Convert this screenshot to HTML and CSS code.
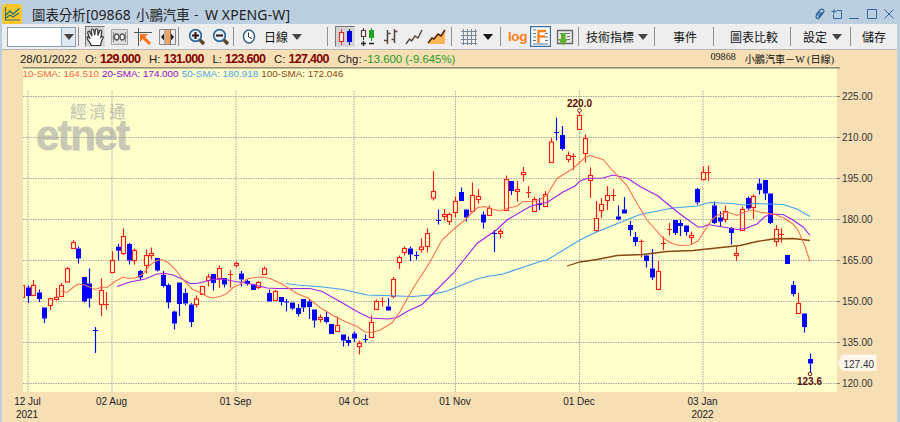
FILE: index.html
```html
<!DOCTYPE html>
<html lang="zh-Hant">
<head>
    <meta charset="UTF-8">
    <meta name="viewport" content="width=device-width, initial-scale=1.0">
    <title>圖表分析[09868 小鵬汽車 - W XPENG-W]</title>
    <link rel="stylesheet" href="styles.css">
</head>
<body>
    <div class="window">
        <header class="titlebar">
            <svg class="app-icon" width="20" height="20" viewBox="0 0 20 20">
                <rect width="20" height="20" rx="3" fill="#fdc72c"/>
                <path d="M3.5 3v13H18" fill="none" stroke="#2b6f78" stroke-width="1.2"/>
                <path d="M4 11l4-4 3 3 6.500-5.500M4 14l4-3 3 2 6-4" fill="none" stroke="#2b6f78" stroke-width="1.3"/>
            </svg>
            <h1 class="title"><span class="title-name">圖表分析</span><span class="title-code">[09868</span><span class="title-stock">小鵬汽車</span><span class="title-dash">-</span><span class="title-en">W XPENG-W]</span></h1>
            <div class="window-buttons">
                <svg width="12" height="12" viewBox="0 0 12 12"><path d="M2 7l4-5c2-2 5 0 3.500 2.500L5.500 9.500C4 11.500 1 10 2.500 7.500L6 3.500M8 4L4.500 8.500" fill="none" stroke="#34689c" stroke-width="1.3"/></svg>
                <svg width="12" height="12" viewBox="0 0 12 12"><path d="M5.500 2.500h5v8h-8v-4M3 1v5M.5 3.500h5" fill="none" stroke="#34689c"/></svg>
                <svg width="12" height="12" viewBox="0 0 12 12"><path d="M1 10.500h10" stroke="#34689c"/></svg>
                <svg width="12" height="12" viewBox="0 0 12 12"><path d="M1.500 1.500h9v9h-9z" fill="none" stroke="#34689c"/></svg>
                <svg width="12" height="12" viewBox="0 0 12 12"><path d="M1.500 1.500l9 9M10.500 1.500l-9 9" stroke="#34689c"/></svg>
            </div>
        </header>

        <nav class="toolbar">
            <div class="group group-combo">
                <div class="combo">
                    <span class="combo-field"></span>
                    <span class="combo-button"><i class="caret"></i></span>
                </div>
            </div>
            <div class="group group-cursor">
                <span class="tool pressed">
                    <svg width="18" height="18" viewBox="0 0 18 18"><path d="M5 17.500c0-3-3.500-4.500-4-8 .5-1.500 2-.5 3 1.500L1.800 5C1.500 3 3.500 2.500 4 4.500L6 8 5.200 2.500c0-2 2.300-2 2.600 0L8.800 7l.5-5.200c.3-1.600 2.500-1.300 2.500.4l.2 5.300 1.500-4.500c.7-1.600 2.700-.8 2.300 1l-1 5.500 1-1c1-.5 1.800.5 1.200 1.500-1.500 2-2 3.500-2.500 7.500z" fill="#fff" stroke="#333" stroke-width="1.200"/></svg>
                </span>
                <span class="tool">
                    <svg width="17" height="16" viewBox="0 0 17 16"><path d="M.5.500h16v15H.5z" fill="#ddd" stroke="#a4a4a4"/><path d="M2.500 3v10M14.500 3v10M1 8h15" stroke="#888"/><ellipse cx="5.700" cy="8" rx="2.200" ry="3" fill="#fff" stroke="#555" stroke-width="1.300"/><ellipse cx="11.300" cy="8" rx="2.200" ry="3" fill="#fff" stroke="#555" stroke-width="1.300"/></svg>
                </span>
                <span class="tool">
                    <svg width="18" height="18" viewBox="0 0 18 18"><path d="M0 4.500h18M4.500 0v18" stroke="#555"/><path d="M6 6h8l-3 2.800 6 6-2.200 2.200-6-6L6 14z" fill="#fa7418"/></svg>
                </span>
                <span class="tool">
                    <svg width="17" height="16" viewBox="0 0 17 16"><path d="M.5.500h16v15H.5z" fill="#ececec" stroke="#888"/><path d="M6 0v16M11.500 0v16" stroke="#777"/><path d="M6.500 1H11v14H6.500z" fill="#f8a15a"/><path d="M5 4.500v7L2 8zM12 4.500v7l3-3.500z" fill="#222"/></svg>
                </span>
            </div>
            <div class="group group-zoom">
                <span class="tool">
                    <svg width="18" height="18" viewBox="0 0 18 18"><path d="M11.500 11.500l4.500 4.500" stroke="#5b4128" stroke-width="3.200"/><circle cx="7.500" cy="7.500" r="5.800" fill="#e4f0fa" stroke="#2d6599" stroke-width="1.700"/><path d="M4 7.500h7M7.500 4v7" stroke="#311" stroke-width="2"/></svg>
                </span>
                <span class="tool">
                    <svg width="18" height="18" viewBox="0 0 18 18"><path d="M11.500 11.500l4.500 4.500" stroke="#5b4128" stroke-width="3.200"/><circle cx="7.500" cy="7.500" r="5.800" fill="#e4f0fa" stroke="#2d6599" stroke-width="1.700"/><path d="M4 7.500h7" stroke="#311" stroke-width="2"/></svg>
                </span>
            </div>
            <div class="group group-period">
                <svg width="14" height="15" viewBox="0 0 14 15"><ellipse cx="7" cy="7.500" rx="5.500" ry="6.500" fill="#fff" stroke="#3c6690" stroke-width="1.600"/><path d="M6.500 3.500v4.500l3.500 1.500" fill="none" stroke="#333"/></svg>
                <span class="label">日線</span>
                <i class="caret"></i>
            </div>
            <div class="group group-style">
                <span class="tool pressed">
                    <svg width="18" height="18" viewBox="0 0 18 18"><path d="M5.500 1v16" stroke="#e33"/><path d="M3.500 4.500h4v9h-4z" fill="#fff" stroke="#e22" stroke-width="1.200"/><path d="M13.500 1v16" stroke="#00c"/><path d="M11 3h5v11h-5z" fill="#00d"/></svg>
                </span>
                <span class="tool">
                    <svg width="18" height="18" viewBox="0 0 18 18"><path d="M4.500 0v12" stroke="#433"/><path d="M2.500 2.500h4v6h-4z" fill="#fff" stroke="#533" stroke-width="1.200"/><path d="M12.500 0v13" stroke="#1a9a1a"/><path d="M10 2h5v8h-5z" fill="#1fa51f"/><path d="M2 15.500h5M4.500 13v5M10 15.500h5" stroke="#222" stroke-width="1.300"/></svg>
                </span>
                <span class="tool">
                    <svg width="18" height="18" viewBox="0 0 18 18"><path d="M5.500 2v14M2 12.500h3.500M5.500 5.500h3M12.500 1v14M9.500 11.500h3M12.500 3.500h3" fill="none" stroke="#54443c" stroke-width="1.500"/></svg>
                </span>
                <span class="tool">
                    <svg width="18" height="18" viewBox="0 0 18 18"><path d="M1 16l3.500-5 2 2 3.500-5 3 2 4-8" fill="none" stroke="#54443c" stroke-width="1.400"/></svg>
                </span>
                <span class="tool">
                    <svg width="20" height="18" viewBox="0 0 20 18"><path d="M1 15l4-5 2 1 4-5 3 2 4-6v14H1z" fill="#fbb456"/><path d="M1 15l4-5 2 1 4-5 3 2 4-6" fill="none" stroke="#54230f" stroke-width="1.600"/></svg>
                </span>
            </div>
            <div class="group group-grid">
                <svg width="16" height="16" viewBox="0 0 16 16"><path d="M2.500 0v16M6.500 0v16M10.500 0v16M14.500 0v16M0 2.500h16M0 6.500h16M0 10.500h16M0 14.500h16" stroke="#788797"/></svg>
                <i class="caret caret-dark"></i>
            </div>
            <div class="group group-scale">
                <span class="log">log</span>
                <span class="tool fib">
                    <svg width="21" height="21" viewBox="0 0 21 21"><path d="M.5.500h20v20H.5z" fill="#fff" stroke="#3a6ea5" stroke-width="1.400"/><path d="M3 4h3M3 7.500h3M3 11h3M3 14.500h3M3 18h15M15 7.500h3M15 11h3M15 14.500h3" stroke="#5b7288"/><path d="M8.500 17V5h7.500M8.500 10.500h6.500" fill="none" stroke="#ff7f1c" stroke-width="2.400"/></svg>
                </span>
                <span class="tool">
                    <svg width="18" height="18" viewBox="0 0 18 18"><path d="M1.500 2.500h15v13h-15z" fill="#e7e7e7" stroke="#666" stroke-width="1.300"/><path d="M4 5.500h10M11 8.500h3M11 11.500h3" stroke="#777"/><path d="M5 5h4.500v6H12l-4.700 6.500L2 11h3z" fill="#5fae2b"/></svg>
                </span>
            </div>
            <div class="group group-indicator"><span class="label">技術指標</span><i class="caret"></i></div>
            <div class="group group-event"><span class="label">事件</span></div>
            <div class="group group-compare"><span class="label">圖表比較</span></div>
            <div class="group group-setting"><span class="label">設定</span><i class="caret"></i></div>
            <div class="group group-save"><span class="label">儲存</span></div>
        </nav>

        <main class="content">
            <div class="quote">
                <span class="date">28/01/2022</span>
                <span class="key key-o">O:</span><b>129.000</b>
                <span class="key key-h">H:</span><b>131.000</b>
                <span class="key key-l">L:</span><b>123.600</b>
                <span class="key key-c">C:</span><b>127.400</b>
                <span class="key key-chg">Chg:</span><span class="change">-13.600 (-9.645%)</span>
                <span class="stock"><span>09868</span><span>小鵬汽車－W (日線)</span></span>
            </div>
            <div class="plot">
                <svg class="chart" id="chart" width="895" height="355" viewBox="2 67 895 355"></svg>
                <div class="legend">
                    <span class="sma10">10-SMA: 164.510</span>
                    <span class="sma20">20-SMA: 174.000</span>
                    <span class="sma50">50-SMA: 180.918</span>
                    <span class="sma100">100-SMA: 172.046</span>
                </div>
            </div>
        </main>
    </div>
    <script src="chart.js"></script>
</body>
</html>
```
FILE: styles.css
```css
* {
    margin: 0;
    padding: 0;
    box-sizing: border-box;
}

body {
    font-family: 'Liberation Sans', 'Noto Sans CJK TC', sans-serif;
    background: #bccfe1;
    color: #222;
    overflow: hidden;
}

.window {
    width: 900px;
    height: 422px;
    padding: 0 3px 0 2px;
    display: flex;
    flex-direction: column;
}

/* title bar */
.titlebar {
    height: 24px;
    display: flex;
    align-items: center;
    padding: 4px 2px 0 0;
}

.title {
    display: flex;
    align-items: center;
    height: 20px;
    margin-left: 10px;
    font-family: 'Noto Sans', 'Noto Sans CJK TC', sans-serif;
    font-size: 13.4px;
    font-weight: normal;
    white-space: nowrap;
}

.title span {
    flex: none;
}

.title-name {
    width: 54px;
}

.title-code {
    width: 50px;
    font-size: 14px;
}

.title-stock {
    width: 58px;
}

.title-dash {
    width: 11px;
}

.title-en {
    font-size: 14px;
    letter-spacing: 0.1px;
}

.window-buttons {
    margin-left: auto;
    display: flex;
    gap: 5.3px;
}

/* toolbar */
.toolbar {
    height: 26px;
    display: flex;
    background: #eeeeee;
    border-bottom: 1px solid #b5b5b5;
}

.group {
    display: flex;
    align-items: center;
    flex: none;
    background: linear-gradient(#8f8f8f, #8f8f8f) right 3px / 1px 19px no-repeat;
}

.group-combo {
    width: 77px;
    padding-left: 5px;
}

.group-cursor {
    width: 100px;
    padding-left: 6px;
    gap: 4px;
}

.group-zoom {
    width: 55px;
    padding-left: 9px;
    gap: 6px;
}

.group-period {
    width: 94px;
    padding-left: 8px;
}

.group-period .label {
    margin: 0 4px 0 8px;
}

.group-style {
    width: 124px;
    padding-left: 7px;
    gap: 3px;
}

.group-grid {
    width: 49px;
    padding-left: 9px;
    gap: 6px;
}

.group-scale {
    width: 78px;
    padding-left: 7px;
}

.group-indicator {
    width: 76px;
    padding-left: 7px;
    gap: 4px;
}

.group-event {
    width: 59px;
    padding-left: 18px;
}

.group-compare {
    width: 77px;
    padding-left: 16px;
}

.group-setting {
    width: 60px;
    padding-left: 12px;
    gap: 5px;
}

.group-save {
    width: 46px;
    padding-left: 11px;
    background: none;
}

.combo {
    display: flex;
    width: 69px;
    height: 20px;
    border: 1px solid #8c9db0;
    background: #fff;
}

.combo-field {
    flex: 1;
}

.combo-button {
    width: 14px;
    display: flex;
    align-items: center;
    justify-content: center;
    border-left: 1px solid #8fb0d0;
    background: #dfe7ef;
}

.caret {
    width: 0;
    height: 0;
    border: 5px solid transparent;
    border-top: 6px solid #444;
    border-bottom: 0;
}

.caret-dark {
    border-top-color: #111;
}

.tool {
    display: flex;
    align-items: center;
    justify-content: center;
    min-width: 18px;
    height: 21px;
}

.tool svg {
    flex: none;
}

.group-cursor .tool,
.group-style .tool {
    width: 20px;
}

.pressed {
    background: #d4d4d4;
    border: 1px solid #777;
    border-right-color: #ddd;
    border-bottom-color: #ddd;
}

.label {
    color: #111;
    font-family: 'Noto Sans CJK TC', sans-serif;
    font-size: 12px;
    line-height: 18px;
    white-space: nowrap;
}

.log {
    width: 21px;
    color: #ff7f1c;
    font-size: 13.5px;
    font-weight: bold;
    letter-spacing: -0.4px;
}

.fib {
    margin: 0 5px 0 1px;
}

/* quote line */
.content {
    flex: 1;
    background: #f7dfb5;
}

.quote {
    height: 17px;
    display: flex;
    align-items: center;
    padding: 0 63px 0 18px;
    font-size: 11.4px;
    white-space: nowrap;
}

.date {
    width: 65px;
}

.quote b {
    width: 49px;
    color: #800000;
    font-size: 12.5px;
    letter-spacing: -0.7px;
}

.key-o {
    width: 15px;
}

.key-h {
    width: 14.5px;
}

.key-l {
    width: 12.5px;
}

.key-c {
    width: 14.5px;
}

.key-chg {
    width: 26px;
}

.change {
    color: #1f9a1f;
}

.stock {
    display: flex;
    gap: 9px;
    margin-left: auto;
    color: #111;
    font-family: 'Liberation Serif', 'Noto Sans CJK TC', serif;
    font-size: 10.1px;
}

/* chart */
.plot {
    position: relative;
}

.chart {
    display: block;
}

.legend {
    position: absolute;
    top: 1px;
    left: 20.5px;
    display: flex;
    gap: 3.2px;
    font-size: 9.9px;
    letter-spacing: -0.03px;
    line-height: 12px;
    white-space: nowrap;
}

.sma10 { color: #ff6347; }
.sma20 { color: #9400d3; }
.sma50 { color: #4aa3e8; }
.sma100 { color: #8b4513; }

.chart text {
    font-size: 10px;
    fill: #222;
}

.chart .axis {
    fill: #333;
}

.chart .middle {
    text-anchor: middle;
}

.chart .brand-cn {
    font-size: 16.5px;
    font-weight: 500;
    letter-spacing: 3px;
    fill: #c8c8b4;
}

.chart .brand {
    font-size: 42px;
    font-weight: bold;
    letter-spacing: -1.6px;
    fill: #c8c8b4;
    stroke: #c8c8b4;
    stroke-width: 0.8;
}

.chart .extreme {
    font-weight: bold;
    fill: #5a0a0a;
}

.grid {
    stroke: #a8a8a0;
    stroke-dasharray: 1.5 1;
}

.line {
    fill: none;
    stroke-width: 1.1;
}

.line10 { stroke: #ff7050; }
.line20 { stroke: #a020f0; }
.line50 { stroke: #40a0f0; }
.line100 { stroke: #8b4513; stroke-width: 1.3; }

.up {
    fill: #ffffcc;
    stroke: #ff1a1a;
    stroke-width: 1.15;
}

.down {
    fill: #0000ff;
    stroke: #0000ff;
    stroke-width: 1.15;
}
```
FILE: chart.js
```js
const chart = document.getElementById('chart');
const START = 22.4;
const STEP = 5.626;

// high, body top, body bottom, low, direction (one row per trading day)
const candles = [
    [285.5, 285.5, 297.5, 297.5, 'u'], [285.5, 287.5, 296, 303, 'd'], [280, 285.5, 295.5, 295.5, 'u'],
    [289.5, 292.5, 299, 302, 'd'], [307.5, 307.5, 318.5, 323, 'd'], [297.5, 298.7, 305.5, 310, 'u'],
    [288, 297.5, 299.5, 300.5, 'u'], [283, 285.5, 296.5, 296.5, 'u'], [267, 268.7, 282, 282, 'u'],
    [240, 242.5, 248.5, 249, 'u'], [246.5, 248.5, 258.5, 263.5, 'd'], [277, 277, 301.5, 302.5, 'd'],
    [268.5, 283.5, 298.5, 307.5, 'd'], [327, 330.5, 330.5, 353, 'd'], [278.5, 290.5, 304.5, 316, 'u'],
    [292, 304.5, 304.5, 309.5, 'u'], [251, 260.5, 272.5, 272.5, 'u'], [243.7, 246.7, 250.7, 260.5, 'd'],
    [228.5, 236.5, 253.5, 255, 'u'], [243, 244, 260.5, 264.5, 'd'], [248.5, 250.5, 260.5, 264.5, 'u'],
    [270, 271, 277.5, 280.5, 'd'], [249.5, 255.5, 265.5, 273.5, 'u'], [247.5, 253.5, 255.5, 259.5, 'u'],
    [258, 258, 270.5, 271.5, 'd'], [271, 275, 286, 287.5, 'd'], [283.5, 285, 302.5, 308.5, 'd'],
    [310.5, 311.5, 323.5, 329.5, 'd'], [282.5, 282.5, 304, 316, 'd'], [288.5, 293, 303.5, 305.5, 'd'],
    [303, 304.5, 322, 327, 'd'], [295.5, 299, 304.5, 307.5, 'u'], [286.5, 286.5, 294.5, 294.5, 'u'],
    [274, 277, 280.5, 286.5, 'u'], [274, 274, 283, 290.5, 'd'], [265.5, 268.5, 278.5, 288, 'u'],
    [278, 278, 284.5, 287.5, 'd'], [270, 274.5, 274.5, 287.5, 'u'], [261.5, 263.5, 265.5, 267.5, 'u'],
    [271, 273.5, 279.5, 286.5, 'd'], [279.5, 281, 284, 285.5, 'd'], [284.5, 284.5, 290, 290, 'd'],
    [281, 282.5, 287.5, 289, 'u'], [266.5, 268.7, 274.5, 274.5, 'u'], [289.5, 293, 301.5, 301.5, 'd'],
    [290, 291.5, 300.5, 300.5, 'u'], [297, 297, 302, 305.5, 'd'], [299, 302, 302, 311.5, 'd'],
    [302.5, 302.5, 308.5, 310, 'd'], [304, 308, 314, 316.5, 'd'], [299, 299, 307.5, 312, 'd'],
    [300, 301.5, 307, 319, 'd'], [309.5, 309.5, 320.5, 327.5, 'd'], [314.5, 317.5, 319.5, 322.5, 'u'],
    [312, 317, 322, 323.5, 'd'], [324, 324, 334, 334, 'd'], [316.5, 325.5, 331.5, 331.5, 'u'],
    [334.5, 334.5, 340.5, 346.5, 'd'], [336.5, 340, 343, 346, 'd'], [331.5, 333.5, 338.5, 342, 'd'],
    [340.5, 343.5, 346.5, 354.5, 'u'], [334.5, 339.5, 339.5, 342.5, 'd'], [315.5, 322.5, 337.5, 337.5, 'u'],
    [299.5, 301.5, 309.5, 309.5, 'u'], [297.5, 301.5, 301.5, 306.5, 'u'], [298, 306.5, 310.5, 310.5, 'd'],
    [277, 279.5, 296.5, 298.5, 'u'], [255.5, 257.5, 262.5, 269, 'u'], [246.5, 248.5, 252.5, 255.5, 'u'],
    [246.5, 248.5, 254.5, 261, 'd'], [251.5, 255.5, 255.5, 259.5, 'd'], [238.5, 247, 249.5, 252.5, 'u'],
    [228.5, 233.5, 246.5, 252.5, 'u'], [171, 191.5, 198, 200.5, 'u'], [209.5, 220.5, 220.5, 224.5, 'd'],
    [209, 214.5, 216.5, 220.5, 'u'], [212.5, 214.5, 221.5, 225, 'u'], [196.5, 201.5, 212.5, 217.5, 'u'],
    [187.5, 192, 201, 201, 'd'], [209.5, 209.5, 217.5, 221.5, 'd'], [182.5, 195.5, 211.5, 211.5, 'u'],
    [189, 196.5, 199.5, 203.5, 'u'], [211.5, 214.5, 222.5, 228.5, 'd'], [205.5, 208.5, 215.5, 215.5, 'u'],
    [230, 233.5, 233.5, 252, 'd'], [228.5, 231.5, 233.5, 238.5, 'u'], [175.5, 179.5, 210.5, 210.5, 'u'],
    [181, 181, 191, 195, 'd'], [181, 189.5, 191.5, 201.5, 'u'], [167, 172.5, 174.5, 181.5, 'u'],
    [186, 192.5, 192.5, 198, 'u'], [196.5, 199.5, 211.5, 211.5, 'u'], [198, 204.5, 204.5, 210, 'd'],
    [191, 194.5, 206.5, 206.5, 'u'], [138, 142, 162.5, 162.5, 'u'], [117.7, 132.5, 132.5, 140.5, 'd'],
    [126, 135, 149, 150.5, 'd'], [151.5, 155.5, 159.5, 162.5, 'u'], [153.5, 156.5, 156.5, 170, 'u'],
    [112, 115.5, 129.5, 129.5, 'u'], [134.5, 138.5, 153.5, 162.5, 'u'], [167.5, 175.5, 180.5, 198, 'u'],
    [201, 218.5, 230.5, 232, 'u'], [198, 204.5, 210.5, 218, 'u'], [186, 195.5, 200.5, 210, 'u'],
    [189, 195.5, 195.5, 201, 'u'], [205.5, 216.5, 219.5, 220.5, 'd'], [197, 209.5, 213.5, 213.5, 'd'],
    [221, 225, 230, 236, 'd'], [232, 237, 242, 246, 'd'], [239.5, 241.5, 241.5, 257.5, 'u'],
    [255, 255.5, 261, 267.5, 'd'], [249, 268.5, 277.5, 280, 'd'], [261, 271.5, 289.5, 290, 'u'],
    [236.5, 243.5, 243.5, 250, 'u'], [223, 229.5, 229.5, 235.5, 'u'], [220, 220, 233, 235, 'd'],
    [220, 223, 226, 236, 'd'], [225.5, 225.5, 232, 235.5, 'd'], [231.5, 235.5, 237.5, 244, 'u'],
    [188, 189, 202.5, 204.5, 'd'], [166.5, 172.5, 179.5, 180.5, 'u'], [165.5, 172.5, 172.5, 181, 'u'],
    [201.5, 205.5, 223, 224, 'd'], [211.5, 217.5, 221.5, 226.5, 'd'], [205.5, 211.5, 219.5, 222.5, 'u'],
    [227, 228, 233, 244.5, 'd'], [246.5, 253.5, 255.5, 261, 'u'], [206.5, 209.5, 230.5, 230.5, 'u'],
    [196.5, 198, 208.5, 210, 'd'], [194.5, 196.5, 207.5, 219, 'u'], [178.5, 183.5, 190, 194.5, 'd'],
    [180, 180, 193.5, 200, 'd'], [193.5, 193.5, 223, 224, 'd'], [225, 229.5, 241.5, 246.5, 'u'],
    [228.5, 234.5, 234.5, 242.5, 'u'], [255, 255, 264, 264, 'd'], [281, 285, 294, 296.5, 'd'],
    [293, 303.5, 313.5, 313.5, 'u'], [313.5, 313.5, 327, 332.5, 'd'], [353.5, 359, 363.5, 373, 'd']
];

const averages = {
    line100: '567,266 580,262 597,259.5 617,255.5 643,254.5 667,251.5 693,250.5 740,245.5 757,241.5 773,239 793,238.5 810,240.5',
    line50: '286,283.5 297,285 323,287 343,289.5 367,295 383,295.5 413,296.5 430,295 447,291 477,279 487,276.5 503,274 540,261.5 547,260 580,240 593,233.5 620,222.5 640,214.5 673,208 697,206 710,202.5 732,203.5 743,205 755,203.5 783,204.5 797,209 810,216.5',
    line20: '117,286.5 130,282 145,279 157,274 165,273.5 173,275 182,279 190,283.5 197,283.5 213,279.5 223,279 233,281 248,283.5 267,288 277,288.5 310,288.5 322,291.5 340,301.5 357,311.5 370,318 388,319 397,317.5 407,311.5 422,304.5 433,293.5 453,273.5 477,243.5 497,229.5 507,220 530,206.5 540,203.5 547,202.5 563,192 575,186 580,181 587,178.5 603,178 613,175 627,178 640,186.5 658,196 667,203.5 680,214 698,227 703,227 708,224.5 723,227 737,229.5 745,228.5 757,224 765,216.5 772,214 783,214.5 793,220 803,227 810,235.5',
    line10: '61,291 67,292.5 73,287.5 78,284 85,285 95,289.5 102,287 107,287.5 115,281.5 123,277 128,278.5 135,278 143,274 150,265 157,260.5 162,259.5 168,262.5 175,269 183,279.5 192,289 200,292.5 207,296.5 213,298 220,296.5 227,293.5 233,287.5 240,284.5 247,279 255,277.5 263,277 270,278.5 282,284 297,293.5 308,298 320,307.5 333,315.5 347,322.5 357,326.5 365,332 372,332.5 380,330 392,323 400,311.5 413,288.5 430,262 440,243.5 443,239 455,228 465,220 473,211.5 478,207.5 485,206.5 492,209 500,211 507,208.5 517,206 523,201.5 533,201.5 540,199.5 547,195 557,178.5 573,168.5 585,157.5 590,155.5 603,159.5 613,171 627,185.5 637,203.5 647,220 663,238 672,243.5 680,245.5 690,245 698,241 705,230 712,219.5 717,215.5 727,212 737,215.5 745,212 752,210 760,212 775,214.5 785,218.5 793,224 798,230 805,246.5 810,261.5'
};

const prices = [['225.00', 96.5], ['210.00', 137.5], ['195.00', 178.5], ['180.00', 219.5], ['165.00', 260.5], ['150.00', 301.5], ['135.00', 342.5], ['120.00', 383.5]];
const dates = [['12 Jul', 28], ['02 Aug', 112], ['01 Sep', 236], ['04 Oct', 354], ['01 Nov', 455.5], ['01 Dec', 579.5], ['03 Jan', 703]];

let out = '<clipPath id="area"><rect x="23" y="68" width="814" height="324"/></clipPath>';
out += '<rect x="23" y="68" width="814" height="324" fill="#ffffcc"/>';
out += '<path d="M23 67.9h817" stroke="#77775c" stroke-width="1.4"/>';
out += '<text class="brand-cn" x="70" y="117.5">經濟通</text>';
out += '<text class="brand" x="36" y="150">etnet</text>';

prices.forEach(([label, y]) => {
    out += `<path class="grid" d="M23 ${y}h814"/><path d="M837 ${y}h3" stroke="#888"/>`;
    out += `<text class="axis" x="842" y="${y + 3.5}">${label}</text>`;
});
dates.forEach(([label, x]) => {
    out += `<path class="grid" d="M${x} 91v301"/>`;
    out += `<text class="middle" x="${x - 0.5}" y="405">${label}</text>`;
});
out += '<text class="middle" x="27" y="417.5">2021</text><text class="middle" x="702.5" y="417.5">2022</text>';

// candles
out += '<g clip-path="url(#area)">';
candles.forEach(([high, top, bottom, low, dir], i) => {
    const x = Math.floor(START + STEP * i) + 0.5;
    const cls = dir === 'u' ? 'up' : 'down';
    if (top === bottom) {
        out += `<path class="${cls}" d="M${x} ${high}V${low}M${x - 2.5} ${top}h5"/>`;
    } else {
        out += `<path class="${cls}" d="M${x} ${high}V${top}M${x} ${bottom}V${low}"/>`;
        if (dir === 'u') {
            out += `<rect class="up" x="${x - 2}" y="${top}" width="4" height="${bottom - top}"/>`;
        } else {
            out += `<rect x="${x - 2.5}" y="${top}" width="5" height="${bottom - top}" fill="#00f"/>`;
        }
    }
});
out += '</g>';

for (const name in averages) {
    out += `<polyline class="line ${name}" points="${averages[name]}"/>`;
}

// period high and low
out += '<circle cx="579.5" cy="110.5" r="1.8" fill="#ffc" stroke="#7a1a1a"/><text class="extreme middle" x="579.5" y="107">220.0</text>';
out += '<circle cx="810" cy="374" r="1.8" fill="#ffc" stroke="#7a1a1a"/><text class="extreme middle" x="809.5" y="384.5">123.6</text>';

// last price tag
out += '<path d="M837.5 363l4-7.5 2-1h33v16.5h-33l-2-1z" fill="#fdf6ec"/>';
out += '<text class="axis" x="843.5" y="368">127.40</text>';

chart.innerHTML = out;
```
